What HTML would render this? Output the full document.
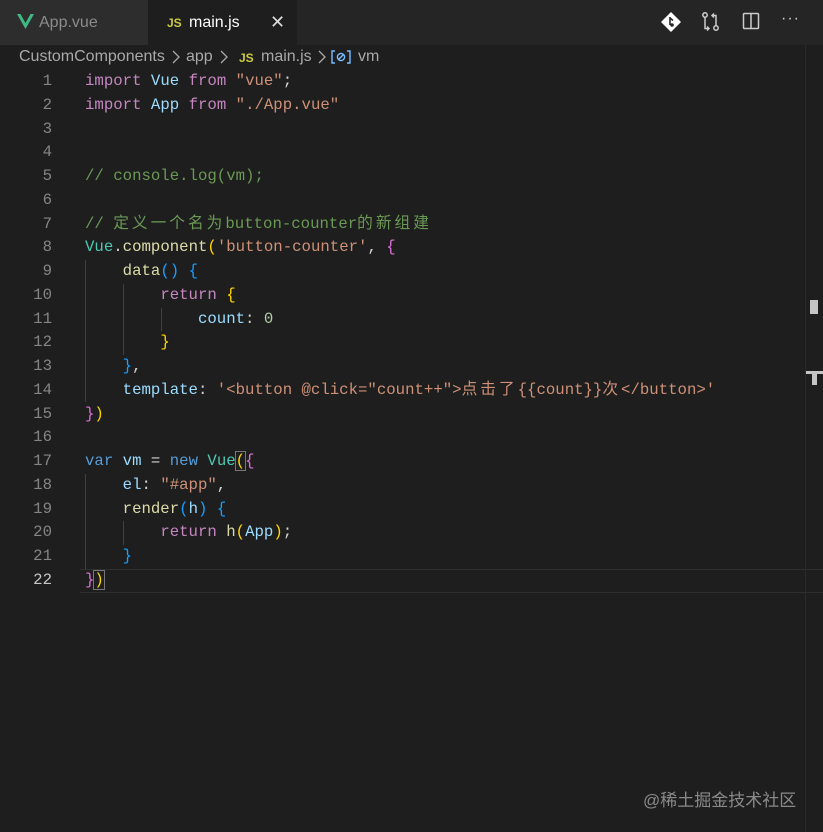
<!DOCTYPE html>
<html><head><meta charset="utf-8">
<style>
html,body{margin:0;padding:0;}
body{width:823px;height:832px;background:#1e1e1e;position:relative;overflow:hidden;font-family:"Liberation Sans","Noto Sans CJK SC",sans-serif;}
.tabbar{position:absolute;left:0;top:0;width:823px;height:45px;background:#252526;}
.tab{position:absolute;top:0;height:45px;font-size:16px;line-height:45px;}
.t1{left:0;width:148px;background:#2d2d2d;color:#8b8b8b;}
.t2{left:148px;width:149px;background:#1e1e1e;color:#fff;}
.bc{position:absolute;top:46px;font-size:16px;color:#a9a9a9;line-height:22px;white-space:nowrap;}
.chev{position:absolute;top:50px;}
.js{color:#cbcb41;font-weight:bold;font-size:12px;}
.code{position:absolute;left:0;top:70px;font-family:"Liberation Mono","Noto Sans CJK SC",monospace;font-size:15.7px;}
.ln{position:absolute;left:0;width:52px;text-align:right;color:#858585;height:23.76px;line-height:23.76px;}
.l{position:absolute;left:85px;height:23.76px;line-height:23.76px;white-space:pre;color:#d4d4d4;}
.z{letter-spacing:3px;}
.k{color:#c586c0}.c{color:#4ec9b0}.s{color:#ce9178}.b{color:#569cd6}.p{color:#9cdcfe}.f{color:#dcdcaa}.cm{color:#6a9955}.n{color:#b5cea8}
.g{color:#ffd700}.o{color:#da70d6}.u{color:#179fff}
.guide{position:absolute;width:1px;background:#404040;}
</style></head><body>
<div class="tabbar">
 <div class="tab t1"><svg style="position:absolute;left:17px;top:14px" width="17" height="15" viewBox="0 0 17 15"><path d="M0 0h3.5l5 9 5-9H17L8.5 15z" fill="#41b883"/></svg><span style="position:absolute;left:39px">App.vue</span></div>
 <div class="tab t2"><span class="js" style="position:absolute;left:19px;top:1px">JS</span><span style="position:absolute;left:41px">main.js</span><span style="position:absolute;left:122px;font-size:18px;color:#ddd">✕</span></div>
 <svg style="position:absolute;left:660px;top:11px" width="22" height="22" viewBox="0 0 22 22"><path d="M11 1l10 10-10 10L1 11z" fill="#fff"/><circle cx="12" cy="14" r="1.8" fill="#252526"/><path d="M10 6v8M10 7l3 2.5" stroke="#252526" stroke-width="1.6" fill="none"/></svg>
 <svg style="position:absolute;left:700px;top:11px" width="22" height="22" viewBox="0 0 22 22" fill="none" stroke="#ccc" stroke-width="1.5"><circle cx="5" cy="4" r="2.2"/><circle cx="16" cy="17" r="2.2"/><path d="M5 6.5v11h4M7 15.5l2 2-2 2M16 14.5v-10h-4M14 2.5l-2 2 2 2"/></svg>
 <svg style="position:absolute;left:742px;top:12px" width="18" height="18" viewBox="0 0 18 18" fill="none" stroke="#ccc" stroke-width="1.5"><rect x="1.5" y="1.5" width="15" height="15" rx="1"/><path d="M9 1.5v15"/></svg>
 <div style="position:absolute;left:781px;top:10px;color:#ccc;font-size:16px;letter-spacing:1px">···</div>
</div>
<div class="bc" style="left:19px">CustomComponents</div>
<svg class="chev" style="left:172px" width="8" height="14" viewBox="0 0 8 14"><path d="M1 1l6 6-6 6" stroke="#a9a9a9" stroke-width="1.3" fill="none"/></svg>
<div class="bc" style="left:186px">app</div>
<svg class="chev" style="left:220px" width="8" height="14" viewBox="0 0 8 14"><path d="M1 1l6 6-6 6" stroke="#a9a9a9" stroke-width="1.3" fill="none"/></svg>
<div class="bc js" style="left:239px;top:47px;font-size:12px">JS</div>
<div class="bc" style="left:261px">main.js</div>
<svg class="chev" style="left:318px" width="8" height="14" viewBox="0 0 8 14"><path d="M1 1l6 6-6 6" stroke="#a9a9a9" stroke-width="1.3" fill="none"/></svg>
<svg style="position:absolute;left:331px;top:50px" width="20" height="14" viewBox="0 0 20 14" fill="none" stroke="#75beff" stroke-width="1.4"><path d="M4 1H1v12h3M16 1h3v12h-3"/><circle cx="10" cy="7" r="3.6"/><path d="M7.5 9.5l5-5"/></svg>
<div class="bc" style="left:358px">vm</div>
<div style="position:absolute;left:80px;top:569px;width:743px;height:22px;border-top:1px solid #2f2f2f;border-bottom:1px solid #2f2f2f;"></div>
<div class="guide" style="left:85px;top:260px;height:142px"></div>
<div class="guide" style="left:123px;top:284px;height:71px"></div>
<div class="guide" style="left:161px;top:308px;height:23px"></div>
<div class="guide" style="left:85px;top:474px;height:95px"></div>
<div class="guide" style="left:123px;top:521px;height:24px"></div>
<div style="position:absolute;left:810px;top:300px;width:8px;height:14px;background:#c5c5c5"></div>
<div style="position:absolute;left:806px;top:371px;width:17px;height:3px;background:#c5c5c5"></div>
<div style="position:absolute;left:812px;top:371px;width:5px;height:14px;background:#c5c5c5"></div>
<div style="position:absolute;left:805px;top:45px;width:1px;height:787px;background:#2a2a2a"></div>
<div class="code">
<div class="ln" style="top:0px">1</div><div class="l" style="top:0px"><span class="k">import</span> <span class="p">Vue</span> <span class="k">from</span> <span class="s">"vue"</span>;</div>
<div class="ln" style="top:23.76px">2</div><div class="l" style="top:23.76px"><span class="k">import</span> <span class="p">App</span> <span class="k">from</span> <span class="s">"./App.vue"</span></div>
<div class="ln" style="top:47.52px">3</div>
<div class="ln" style="top:71.28px">4</div>
<div class="ln" style="top:95.04px">5</div><div class="l" style="top:95.04px"><span class="cm">// console.log(vm);</span></div>
<div class="ln" style="top:118.8px">6</div>
<div class="ln" style="top:142.56px">7</div><div class="l" style="top:142.56px"><span class="cm">// <span class="z">定义一个名为</span>button-counter<span class="z">的新组建</span></span></div>
<div class="ln" style="top:166.32px">8</div><div class="l" style="top:166.32px"><span class="c">Vue</span>.<span class="f">component</span><span class="g">(</span><span class="s">'button-counter'</span>, <span class="o">{</span></div>
<div class="ln" style="top:190.08px">9</div><div class="l" style="top:190.08px">    <span class="f">data</span><span class="u">()</span> <span class="u">{</span></div>
<div class="ln" style="top:213.84px">10</div><div class="l" style="top:213.84px">        <span class="k">return</span> <span class="g">{</span></div>
<div class="ln" style="top:237.6px">11</div><div class="l" style="top:237.6px">            <span class="p">count</span>: <span class="n">0</span></div>
<div class="ln" style="top:261.36px">12</div><div class="l" style="top:261.36px">        <span class="g">}</span></div>
<div class="ln" style="top:285.12px">13</div><div class="l" style="top:285.12px">    <span class="u">}</span>,</div>
<div class="ln" style="top:308.88px">14</div><div class="l" style="top:308.88px">    <span class="p">template</span>: <span class="s">'&lt;button @click="count++"&gt;<span class="z">点击了</span>{{count}}<span class="z">次</span>&lt;/button&gt;'</span></div>
<div class="ln" style="top:332.64px">15</div><div class="l" style="top:332.64px"><span class="o">}</span><span class="g">)</span></div>
<div class="ln" style="top:356.4px">16</div>
<div class="ln" style="top:380.16px">17</div><div class="l" style="top:380.16px"><span class="b">var</span> <span class="p">vm</span> = <span class="b">new</span> <span class="c">Vue</span><span class="g" style="outline:1px solid #777">(</span><span class="o">{</span></div>
<div class="ln" style="top:403.92px">18</div><div class="l" style="top:403.92px">    <span class="p">el</span>: <span class="s">"#app"</span>,</div>
<div class="ln" style="top:427.68px">19</div><div class="l" style="top:427.68px">    <span class="f">render</span><span class="u">(</span><span class="p">h</span><span class="u">)</span> <span class="u">{</span></div>
<div class="ln" style="top:451.44px">20</div><div class="l" style="top:451.44px">        <span class="k">return</span> <span class="f">h</span><span class="g">(</span><span class="p">App</span><span class="g">)</span>;</div>
<div class="ln" style="top:475.2px">21</div><div class="l" style="top:475.2px">    <span class="u">}</span></div>
<div class="ln" style="top:498.96px;color:#c6c6c6">22</div><div class="l" style="top:498.96px"><span class="o">}</span><span class="g" style="outline:1px solid #777">)</span></div>
</div>
<div style="position:absolute;left:643px;top:786px;font-size:17px;color:#8a8a8a;white-space:nowrap">@稀土掘金技术社区</div>
</body></html>
